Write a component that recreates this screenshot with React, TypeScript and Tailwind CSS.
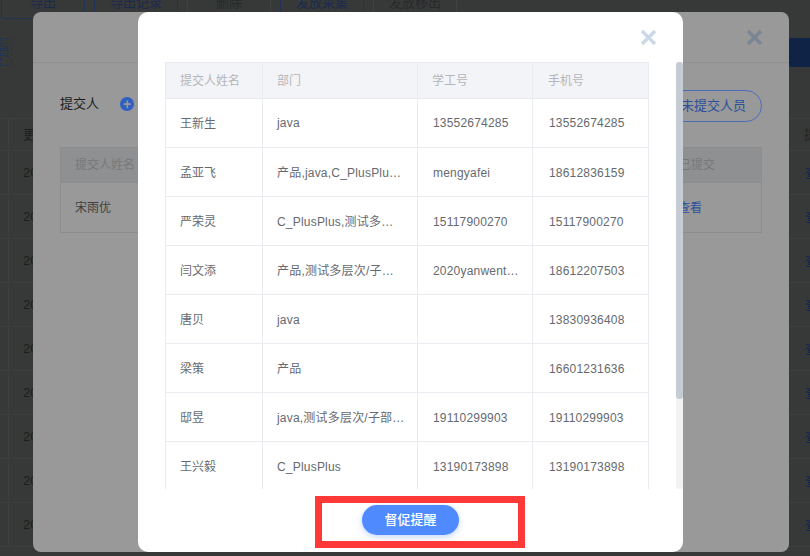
import React from "react";

const rows = [
  ["王新生", "java", "13552674285", "13552674285"],
  ["孟亚飞", "产品,java,C_PlusPlu…", "mengyafei", "18612836159"],
  ["严荣灵", "C_PlusPlus,测试多…", "15117900270", "15117900270"],
  ["闫文添", "产品,测试多层次/子…", "2020yanwent…", "18612207503"],
  ["唐贝", "java", "", "13830936408"],
  ["梁策", "产品", "", "16601231636"],
  ["邸昱", "java,测试多层次/子部…", "19110299903", "19110299903"],
  ["王兴毅", "C_PlusPlus", "13190173898", "13190173898"],
];

const font = "font-['Liberation_Sans','Noto_Sans_CJK_SC',sans-serif]";

const CloseIcon = ({ color }: { color: string }) => (
  <svg width="17" height="17" viewBox="0 0 17 17" className={color}>
    <path d="M2 2 L15 15 M15 2 L2 15" stroke="currentColor" strokeWidth="3.4" fill="none" />
  </svg>
);

const App = () => {
  return (
    <div className={`relative w-[810px] h-[556px] overflow-hidden bg-[#373938] ${font}`}>
      {/* page behind the dialogs */}
      <div className="flex flex-col h-full">
        <div className="flex gap-[9px] pl-[1px] h-[20px] -mt-[1px]">
          {["导出", "导出记录", "删除", "发放采集", "发放移出"].map((t, i) => (
            <div
              key={t}
              className={`w-[84px] h-[20px] rounded-b-[3px] border text-center text-[13px] leading-[5px] ${
                i === 0 || i === 1 || i === 3
                  ? "border-[#1f3357] text-[#1a2a50]"
                  : "border-[#3f4142] text-[#28292a]"
              }`}
            >
              {t}
            </div>
          ))}
        </div>
        <div className="flex justify-between h-[47px] pt-[19px]">
          <div className="w-[12px] h-[28px] border border-dashed border-[#1f3357] rounded-r-[3px] text-[13px] leading-[26px] text-[#1f3357] overflow-hidden">
            <span className="block -ml-[4px]">员</span>
          </div>
          <div className="w-[21px] h-[29px] rounded-l-[2px] bg-[#0e2345]" />
        </div>
        <div className="mt-[52px] flex justify-between h-[33px] border-y border-[#3d3f3e] pl-[8px] text-[13px] leading-[31px] text-[#1c1d1e]">
          <span className="border-l border-[#3d3f3e] pl-[14px]">更</span>
          <span className="-mr-[7px] text-[#242526]">提</span>
        </div>
        {Array.from({ length: 9 }).map((_, i) => (
          <div
            key={i}
            className="flex justify-between h-[44px] shrink-0 border-b border-[#3d3f3e] pl-[8px] text-[13px] leading-[44px] text-[#1c1d1e]"
          >
            <span className="border-l border-[#3d3f3e] pl-[14px]">20</span>
            <span className="text-[#13264d] -mr-[21px]">查看</span>
          </div>
        ))}
      </div>

      {/* first dialog, dimmed */}
      <div className="absolute left-[33px] top-[12px] w-[756px] h-[540px] rounded-[8px] bg-[#999999]">
        <div className="flex justify-end h-[51px] border-b border-[#8f8f8f] pt-[17px] pr-[26px]">
          <CloseIcon color="text-[#7b8594]" />
        </div>
        <div className="flex items-center justify-between h-[66px] pl-[27px] pr-[27px] pt-[20px]">
          <div className="flex items-center gap-[21px] -mt-[5px] text-[13px] text-[#1e1e1e]">
            <span>提交人</span>
            <span className="flex w-[14px] h-[14px] items-center justify-center rounded-full bg-[#2f5fc4] text-[14px] font-bold leading-none text-[#999999]">+</span>
          </div>
          <div className="flex items-center h-[32px] rounded-full border border-[#4a6fb8] pl-[100px] pr-[15px] text-[13px] text-[#2a4f9e]">
            未提交人员
          </div>
        </div>
        <div className="mx-[27px] mt-[18px] border border-[#8c8d8e] text-[12px]">
          <div className="flex h-[35px] items-center justify-between bg-[#8f9092] border-b border-[#8c8d8e] pl-[14px] pr-[46px] text-[#777879]">
            <span>提交人姓名</span>
            <span>已提交</span>
          </div>
          <div className="flex h-[49px] items-center justify-between pl-[14px] pr-[59px] text-[#3f3f3f]">
            <span>宋雨优</span>
            <span className="text-[#2a4f9e]">查看</span>
          </div>
        </div>
      </div>

      {/* second dialog */}
      <div className="absolute left-[138px] top-[12px] flex w-[545px] h-[540px] flex-col rounded-[10px] bg-white">
        <div className="absolute right-[26px] top-[17px]">
          <CloseIcon color="text-[#cbd8e8]" />
        </div>
        <div className="flex mt-[50px] h-[427px]">
          <div className="ml-[27px] w-[484px] overflow-hidden">
            <table className="w-[484px] table-fixed border-collapse text-[12px] tracking-[0.2px] text-[#666a70]">
              <thead>
                <tr className="h-[36px] bg-[#f3f4f7] text-[#b5b6b9] tracking-normal">
                  <th className="w-[97px] border border-[#eaebf0] px-[14px] text-left font-normal">提交人姓名</th>
                  <th className="w-[155px] border border-[#eaebf0] px-[14px] text-left font-normal">部门</th>
                  <th className="w-[115px] border border-[#eaebf0] px-[14px] text-left font-normal">学工号</th>
                  <th className="border border-[#eaebf0] px-[15px] text-left font-normal">手机号</th>
                </tr>
              </thead>
              <tbody>
                {rows.map((r, i) => {
                  const pad = i === 0 ? "" : "pt-[1px]";
                  return (
                    <tr key={r[0]} className="h-[49px]">
                      <td className="border border-[#eaebf0] px-[14px] pt-[1px] tracking-normal">{r[0]}</td>
                      <td className={`border border-[#eaebf0] px-[14px] whitespace-nowrap ${pad}`}>{r[1]}</td>
                      <td className={`border border-[#eaebf0] px-[15px] whitespace-nowrap ${pad}`}>{r[2]}</td>
                      <td className={`border border-[#eaebf0] px-[16px] ${pad}`}>{r[3]}</td>
                    </tr>
                  );
                })}
              </tbody>
            </table>
          </div>
          <div className="ml-auto w-[7px] h-[427px] rounded-[3px] bg-[#f3f3f3]">
            <div className="h-[337px] rounded-[3px] bg-[#c5ccd4]" />
          </div>
        </div>
        <div className="flex justify-center pt-[16px]">
          <button className="w-[97px] h-[30px] rounded-full bg-[#4f8aff] text-[13px] font-medium text-white shadow-[0_2px_6px_rgba(79,138,255,0.35)]">
            督促提醒
          </button>
        </div>
      </div>

      {/* red annotation box */}
      <div className="absolute left-[315px] top-[496px] w-[210px] h-[52px] border-[7px] border-[#ff3838]" />
    </div>
  );
};

export default App;
